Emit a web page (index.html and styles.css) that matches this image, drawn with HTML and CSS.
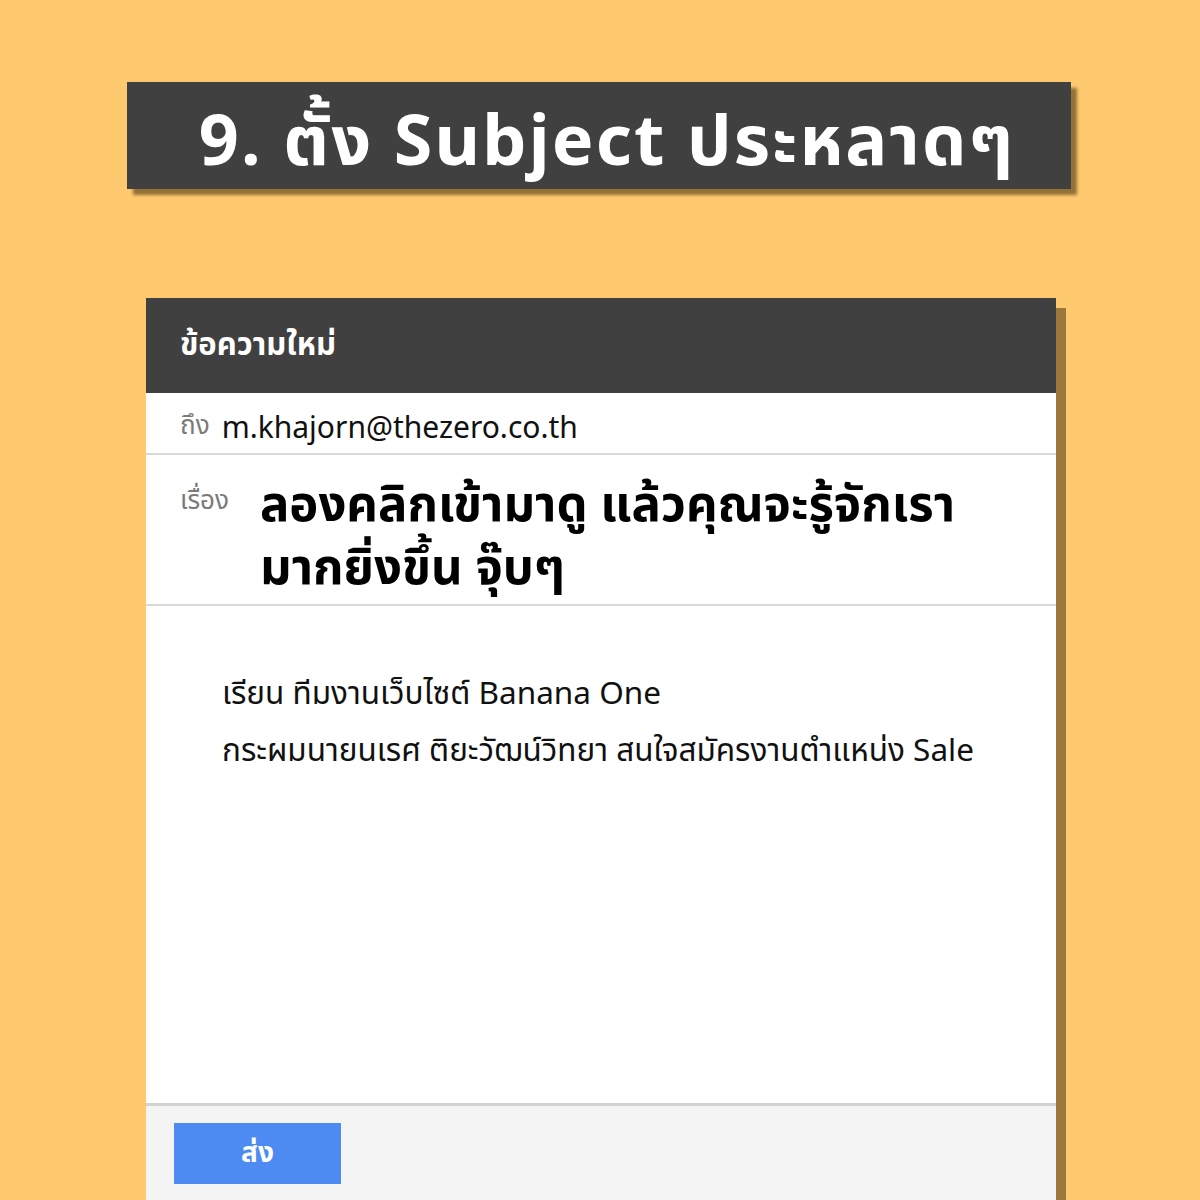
FILE: index.html
```html
<!DOCTYPE html>
<html lang="th">
<head>
<meta charset="utf-8">
<link rel="stylesheet" href="styles.css">
</head>
<body>
<div class="page">
  <div class="title-bar"><h1 class="title">9. ตั้ง Subject ประหลาดๆ</h1></div>
  <div class="card">
    <div class="card-head">ข้อความใหม่</div>
    <div class="row to-row"><span class="label">ถึง</span><span class="email">m.khajorn@thezero.co.th</span></div>
    <div class="row subject-row"><span class="label subj-label">เรื่อง</span><span class="subject">ลองคลิกเข้ามาดู แล้วคุณจะรู้จักเรา<br>มากยิ่งขึ้น จุ๊บๆ</span></div>
    <div class="body">
      <p class="line">เรียน ทีมงานเว็บไซต์ Banana One</p>
      <p class="line">กระผมนายนเรศ ติยะวัฒน์วิทยา สนใจสมัครงานตำแหน่ง Sale</p>
    </div>
    <div class="foot"><button class="send">ส่ง</button></div>
  </div>
</div>
</body>
</html>
```
FILE: styles.css
```css
html, body { margin: 0; padding: 0; }
body {
  width: 1200px; height: 1200px; overflow: hidden;
  background: #ffc96f;
  font-family: "Noto Sans", "Noto Sans Thai", "Loma", "Garuda", "DejaVu Sans", sans-serif;
}
.page { padding-top: 82px; display: flex; flex-direction: column; align-items: flex-start; }
.title-bar {
  margin-left: 127px; width: 944px; height: 107px;
  background: #404040;
  box-shadow: 6px 6px 3px rgba(60, 40, 10, 0.55);
  display: flex; align-items: center; justify-content: center;
}
.title { margin: 4px 0 0 16px; color: #fff; font-size: 70px; font-weight: 700; letter-spacing: 2.2px; line-height: 1; }
.card {
  margin-top: 109px; margin-left: 146px; width: 910px; height: 920px;
  background: #fff;
  box-shadow: 10px 10px 0 rgba(60, 40, 10, 0.5);
  display: flex; flex-direction: column;
}
.card-head {
  height: 95px; background: #404040; color: #fff;
  font-size: 31px; font-weight: 700; padding-left: 34px;
  display: flex; align-items: center; box-sizing: border-box; flex: none;
}
.row { display: flex; border-bottom: 2px solid #d9d9d9; padding-left: 34px; flex: none; }
.to-row { height: 62px; align-items: center; box-sizing: border-box; padding-top: 6px; }
.label { color: #7a7a7a; font-size: 26px; }
.email { color: #111; font-size: 30px; margin-left: 12px; }
.subject-row { height: 151px; box-sizing: border-box; padding-top: 16px; align-items: flex-start; }
.subj-label { font-size: 26px; margin-top: 10px; }
.subject { font-size: 49px; font-weight: 700; color: #000; line-height: 63px; margin-left: 31px; }
.body { flex: none; height: 497px; box-sizing: border-box; padding: 66px 0 0 76px; }
.line { margin: 0 0 17px; font-size: 31.5px; line-height: 40px; color: #111; }
.foot {
  flex: 1; background: #f4f4f4; border-top: 3px solid #d2d2d2;
  padding: 17px 0 0 28px; box-sizing: border-box;
}
.send {
  width: 167px; height: 61px; border: 0; background: #4d8bf2;
  color: #fff; font-family: inherit; font-size: 28px; font-weight: 700; padding: 0;
}
```
